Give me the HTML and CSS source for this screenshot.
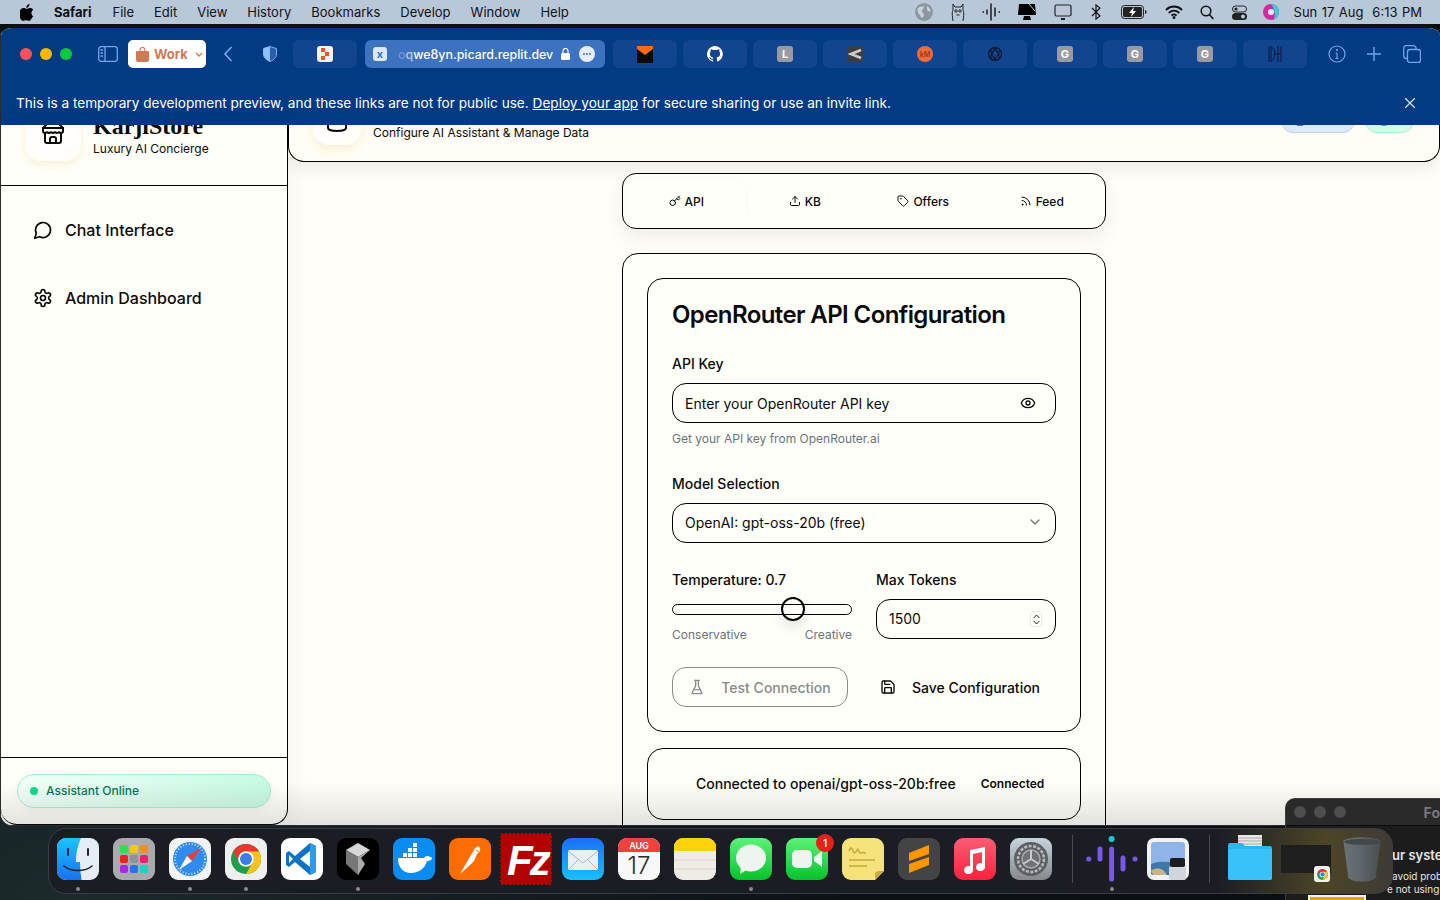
FILE: index.html
```html
<!DOCTYPE html>
<html lang="en">
<head>
    <meta charset="UTF-8">
    <meta name="viewport" content="width=device-width, initial-scale=1.0">
    <title>KarjiStore Admin Dashboard</title>
    <link rel="stylesheet" href="styles.css">
</head>
<body>
    <svg class="sprite" aria-hidden="true">
        <symbol id="i-chrome" viewBox="0 0 24 24">
            <circle cx="12" cy="12" r="10" fill="#1e9e4a"/>
            <path d="M3.34 7A10 10 0 0 1 20.66 7H12A5 5 0 0 0 7.67 14.5Z" fill="#e8382d"/>
            <path d="M20.66 7A10 10 0 0 1 12 22L16.33 14.5A5 5 0 0 0 12 7Z" fill="#fcc419"/>
            <circle cx="12" cy="12" r="5.2" fill="#fff"/>
            <circle cx="12" cy="12" r="4" fill="#3b7de8"/>
        </symbol>
        <symbol id="i-store" viewBox="0 0 24 24">
            <path d="m2 7 4.41-4.41A2 2 0 0 1 7.83 2h8.34a2 2 0 0 1 1.42.59L22 7"/><path d="M4 12v8a2 2 0 0 0 2 2h12a2 2 0 0 0 2-2v-8"/><path d="M15 22v-4a2 2 0 0 0-2-2h-2a2 2 0 0 0-2 2v4"/><path d="M2 7h20"/><path d="M22 7v3a2 2 0 0 1-2 2a2.7 2.7 0 0 1-1.59-.63.7.7 0 0 0-.82 0A2.7 2.7 0 0 1 16 12a2.7 2.7 0 0 1-1.59-.63.7.7 0 0 0-.82 0A2.7 2.7 0 0 1 12 12a2.7 2.7 0 0 1-1.59-.63.7.7 0 0 0-.82 0A2.7 2.7 0 0 1 8 12a2.7 2.7 0 0 1-1.59-.63.7.7 0 0 0-.82 0A2.7 2.7 0 0 1 4 12a2 2 0 0 1-2-2V7"/>
        </symbol>
        <symbol id="i-chat" viewBox="0 0 24 24"><path d="M7.9 20A9 9 0 1 0 4 16.1L2 22Z"/></symbol>
        <symbol id="i-gear" viewBox="0 0 24 24">
            <path d="M12.22 2h-.44a2 2 0 0 0-2 2v.18a2 2 0 0 1-1 1.73l-.43.25a2 2 0 0 1-2 0l-.15-.08a2 2 0 0 0-2.73.73l-.22.38a2 2 0 0 0 .73 2.73l.15.1a2 2 0 0 1 1 1.72v.51a2 2 0 0 1-1 1.74l-.15.09a2 2 0 0 0-.73 2.73l.22.38a2 2 0 0 0 2.73.73l.15-.08a2 2 0 0 1 2 0l.43.25a2 2 0 0 1 1 1.73V20a2 2 0 0 0 2 2h.44a2 2 0 0 0 2-2v-.18a2 2 0 0 1 1-1.73l.43-.25a2 2 0 0 1 2 0l.15.08a2 2 0 0 0 2.73-.73l.22-.39a2 2 0 0 0-.73-2.73l-.15-.08a2 2 0 0 1-1-1.74v-.5a2 2 0 0 1 1-1.74l.15-.09a2 2 0 0 0 .73-2.73l-.22-.38a2 2 0 0 0-2.73-.73l-.15.08a2 2 0 0 1-2 0l-.43-.25a2 2 0 0 1-1-1.73V4a2 2 0 0 0-2-2z"/><circle cx="12" cy="12" r="3"/>
        </symbol>
        <symbol id="i-key" viewBox="0 0 24 24"><path d="m15.5 7.5 2.3 2.3a1 1 0 0 0 1.4 0l2.1-2.1a1 1 0 0 0 0-1.4L19 4"/><path d="m21 2-9.6 9.6"/><circle cx="7.5" cy="15.5" r="5.5"/></symbol>
        <symbol id="i-upload" viewBox="0 0 24 24"><path d="M21 15v4a2 2 0 0 1-2 2H5a2 2 0 0 1-2-2v-4"/><polyline points="17 8 12 3 7 8"/><line x1="12" x2="12" y1="3" y2="15"/></symbol>
        <symbol id="i-tag" viewBox="0 0 24 24"><path d="M12.586 2.586A2 2 0 0 0 11.172 2H4a2 2 0 0 0-2 2v7.172a2 2 0 0 0 .586 1.414l8.704 8.704a2.426 2.426 0 0 0 3.42 0l6.58-6.58a2.426 2.426 0 0 0 0-3.42z"/><circle cx="7.5" cy="7.5" r=".5"/></symbol>
        <symbol id="i-rss" viewBox="0 0 24 24"><path d="M4 11a9 9 0 0 1 9 9"/><path d="M4 4a16 16 0 0 1 16 16"/><circle cx="5" cy="19" r="1"/></symbol>
        <symbol id="i-eye" viewBox="0 0 24 24"><path d="M2.062 12.348a1 1 0 0 1 0-.696 10.75 10.75 0 0 1 19.876 0 1 1 0 0 1 0 .696 10.75 10.75 0 0 1-19.876 0"/><circle cx="12" cy="12" r="3"/></symbol>
        <symbol id="i-chevron" viewBox="0 0 24 24"><path d="m6 9 6 6 6-6"/></symbol>
        <symbol id="i-flask" viewBox="0 0 24 24"><path d="M10 2v7.527a2 2 0 0 1-.211.896L4.72 20.55a1 1 0 0 0 .9 1.45h12.76a1 1 0 0 0 .9-1.45l-5.069-10.127A2 2 0 0 1 14 9.527V2"/><path d="M8.5 2h7"/><path d="M7 16h10"/></symbol>
        <symbol id="i-save" viewBox="0 0 24 24"><path d="M15.2 3a2 2 0 0 1 1.4.6l3.8 3.8a2 2 0 0 1 .6 1.4V19a2 2 0 0 1-2 2H5a2 2 0 0 1-2-2V5a2 2 0 0 1 2-2z"/><path d="M17 21v-7a1 1 0 0 0-1-1H8a1 1 0 0 0-1 1v7"/><path d="M7 3v4a1 1 0 0 0 1 1h7"/></symbol>
        <symbol id="i-database" viewBox="0 0 24 24"><ellipse cx="12" cy="5" rx="9" ry="3"/><path d="M3 5v14a9 3 0 0 0 18 0V5"/><path d="M3 12a9 3 0 0 0 18 0"/></symbol>
    </svg>

    <!-- Menu bar -->
    <header class="menubar">
        <svg class="apple" width="14" height="17" viewBox="0 0 14 17"><path d="M9.6 0c.1 1-.3 2-.9 2.700-.6.700-1.500 1.200-2.400 1.100-.1-1 .3-2 .9-2.600C7.800.500 8.800 0 9.600 0zM12.800 12.400c-.4.900-.6 1.300-1.100 2.100-.7 1.100-1.700 2.400-2.900 2.400-1.100 0-1.400-.7-2.900-.7s-1.800.7-2.900.7c-1.200 0-2.100-1.200-2.800-2.300C-.800 11.500-1 7.900.200 6.100 1 4.800 2.400 4 3.700 4c1.300 0 2.200.8 3.200.8s1.700-.8 3.200-.8c1.200 0 2.400.6 3.200 1.700-2.800 1.600-2.400 5.600.500 6.700z" fill="#000"/></svg>
        <strong class="menu-app">Safari</strong>
        <span>File</span><span>Edit</span><span>View</span><span>History</span><span>Bookmarks</span><span>Develop</span><span>Window</span><span>Help</span>
        <div class="status-items">
            <svg class="s-globe" width="18" height="18" viewBox="0 0 18 18"><circle cx="9" cy="9" r="9" fill="#8e979f"/><path d="M3 5c2-1 4-2 6-1 0 2-2 2-2 4s2 2 2 4-2 3-3 3c0-2-1-3-2-4S2 7 3 5zM12 3c2 1 3 3 4 5-2 1-4 0-4-2z" fill="#c9d3dc"/></svg>
            <svg class="s-llama" width="16" height="20" viewBox="0 0 16 20" fill="none" stroke="#222" stroke-width="1"><path d="M3 8V2l2 3h6l2-3v6c1 2 1 5 0 11M3 8c-1 2-1 5 0 11"/><circle cx="6" cy="9" r="1.200"/><circle cx="10" cy="9" r="1.200"/><path d="M6.500 13h3"/></svg>
            <svg class="s-wave" width="18" height="18" viewBox="0 0 18 18" stroke="#111" stroke-width="1.400" stroke-linecap="round"><path d="M1 9h.5M5 7v4M9 1v16M13 5v8M17 9h.5"/></svg>
            <svg class="s-mon" width="20" height="18" viewBox="0 0 20 18"><path d="M2 1h16l1 11H1zM7 13h6l1 4H6z" fill="#000"/><path d="M12 1l6 7" stroke="#fff" stroke-width=".800"/></svg>
            <svg class="s-display" width="18" height="16" viewBox="0 0 18 16" fill="none" stroke="#222" stroke-width="1.200"><rect x="1" y="1" width="16" height="11" rx="1.500"/><path d="M7 15h4" stroke-width="2"/></svg>
            <svg class="s-bt" width="10" height="16" viewBox="0 0 10 16" fill="none" stroke="#111" stroke-width="1.200"><path d="M1 4l8 8-4 3V1l4 3-8 8"/></svg>
            <svg class="s-batt" width="26" height="14" viewBox="0 0 26 14"><rect x=".500" y=".500" width="22" height="13" rx="3" fill="none" stroke="#222"/><rect x="2" y="2" width="19" height="10" rx="1.500" fill="#222"/><path d="M24 5v4c1 0 1.500-1 1.500-2S25 5 24 5z" fill="#222"/><path d="M13 2L8 8h3l-1 4 5-6h-3z" fill="#fff"/></svg>
            <svg class="s-wifi" width="18" height="14" viewBox="0 0 18 14" fill="none" stroke="#111" stroke-width="1.800" stroke-linecap="round"><path d="M1.500 4.500c4-4 11-4 15 0M4.300 7.500c2.500-2.500 6.900-2.500 9.400 0M7 10.200c1.200-1 2.800-1 4 0"/><circle cx="9" cy="12.500" r=".600"/></svg>
            <svg class="s-search" width="14" height="15" viewBox="0 0 14 15" fill="none" stroke="#111" stroke-width="1.500"><circle cx="6" cy="6" r="4.800"/><path d="M9.500 9.500l3.800 4.500"/></svg>
            <svg class="s-ctrl" width="15" height="15" viewBox="0 0 15 15"><rect x=".500" y="1" width="14" height="6" rx="3" fill="none" stroke="#222"/><circle cx="4" cy="4" r="1.600" fill="#222"/><rect y="8" width="15" height="7" rx="3.500" fill="#222"/><circle cx="11" cy="11.500" r="2" fill="#b8c8d9"/></svg>
            <svg class="s-siri" width="16" height="16" viewBox="0 0 16 16"><circle cx="8" cy="8" r="8" fill="#d32aa0"/><path d="M8 0a8 8 0 0 1 8 8 8 8 0 0 1-5 7.400C13 10 11 4 8 0z" fill="#3fc9d8"/><circle cx="8" cy="8" r="3" fill="#e6e6ff"/></svg>
        </div>
        <span class="menu-clock">Sun 17 Aug&nbsp;&nbsp;6:13 PM</span>
    </header>

    <!-- Browser window -->
    <div class="safari">
        <div class="toolbar">
            <div class="tab-row">
                <div class="lights"><i class="red"></i><i class="yellow"></i><i class="green"></i></div>
                <svg class="tb-sidebar" width="20" height="16" viewBox="0 0 20 16" fill="none" stroke="#6ea8ef" stroke-width="1.300"><rect x=".700" y=".700" width="18.600" height="14.600" rx="2.500"/><path d="M7 1v14M2.500 4h2.500M2.500 7h2.500M2.500 10h2.500"/></svg>
                <div class="profile">
                    <svg width="13" height="15" viewBox="0 0 13 15"><path d="M1 4h11a1 1 0 0 1 1 1v8a2 2 0 0 1-2 2H2a2 2 0 0 1-2-2V5a1 1 0 0 1 1-1z" fill="#d07a55"/><path d="M4 5V3a2.500 2.500 0 0 1 5 0v2" fill="none" stroke="#d07a55" stroke-width="1.200"/></svg>
                    <span>Work</span>
                    <svg class="profile-arrow" width="8" height="5" viewBox="0 0 8 5" fill="none" stroke="#d07a55" stroke-width="1.300"><path d="M1 1l3 3 3-3"/></svg>
                </div>
                <svg class="tb-back" width="10" height="16" viewBox="0 0 10 16" fill="none" stroke="#6ea8ef" stroke-width="1.700"><path d="M8.500 1L2 8l6.500 7"/></svg>
                <svg class="tb-shield" width="14" height="16" viewBox="0 0 14 16"><path d="M7 .500L13.500 2.500V8c0 3.500-3 6.200-6.500 7.500C3.500 14.200.500 11.500.500 8V2.500z" fill="#2a5ea8" stroke="#7fb2f2"/><path d="M7 .500L.500 2.500V8c0 3.500 3 6.200 6.500 7.500z" fill="#8fbdf5"/></svg>

                <div class="tab"><span class="fav fav-zap"><i></i><i></i><i></i></span></div>
                <div class="tab tab-active">
                    <span class="fav fav-x">x</span>
                    <span class="tab-url"><span class="faded">o</span><span class="half">q</span>we8yn.picard.replit.dev</span>
                    <svg width="9" height="12" viewBox="0 0 9 12"><rect y="5" width="9" height="7" rx="1.500" fill="#fff"/><path d="M2 5.500V3a2.500 2.500 0 0 1 5 0v2.500" fill="none" stroke="#fff" stroke-width="1.200"/></svg>
                    <span class="tab-more"><i></i><i></i><i></i></span>
                </div>
                <div class="tab tab-gap"><svg width="16" height="17" viewBox="0 0 16 17"><rect width="16" height="17" fill="#0a0a0a"/><path d="M0 0h16v3L8 9 0 3z" fill="#ff6a13"/></svg></div>
                <div class="tab"><svg width="16" height="16" viewBox="0 0 16 16"><path fill="#fff" d="M8 0a8 8 0 0 0-2.500 15.600c.4.100.5-.200.500-.400v-1.400c-2.200.500-2.700-1-2.700-1-.4-.9-.9-1.200-.9-1.200-.7-.5.100-.5.100-.5.800.100 1.200.8 1.200.8.700 1.200 1.900.9 2.300.7.100-.5.300-.9.500-1.100-1.800-.2-3.600-.9-3.600-4 0-.9.300-1.600.8-2.100-.1-.2-.4-1 .1-2.100 0 0 .7-.2 2.200.8a7.600 7.600 0 0 1 4 0c1.500-1 2.200-.8 2.200-.8.400 1.100.2 1.900.1 2.100.5.600.8 1.300.8 2.100 0 3.100-1.900 3.700-3.700 3.900.3.300.6.800.6 1.500v2.200c0 .2.100.5.600.4A8 8 0 0 0 8 0z"/></svg></div>
                <div class="tab"><span class="fav fav-letter">L</span></div>
                <div class="tab"><span class="fav fav-chev"><svg width="14" height="12" viewBox="0 0 14 12" fill="none" stroke="#ccc" stroke-width="2.500"><path d="M13 2L3 6l10 4"/></svg></span></div>
                <div class="tab"><span class="fav fav-orange">kM</span></div>
                <div class="tab"><svg width="16" height="16" viewBox="0 0 16 16" fill="none" stroke="#0b1a36" stroke-width="1.300"><circle cx="8" cy="8" r="6.500"/><ellipse cx="8" cy="8" rx="6.500" ry="3" transform="rotate(60 8 8)"/><ellipse cx="8" cy="8" rx="6.500" ry="3" transform="rotate(-60 8 8)"/></svg></div>
                <div class="tab"><span class="fav fav-letter">G</span></div>
                <div class="tab"><span class="fav fav-letter">G</span></div>
                <div class="tab"><span class="fav fav-letter">G</span></div>
                <div class="tab"><svg width="16" height="18" viewBox="0 0 16 18" fill="none" stroke="#0b1a36" stroke-width="1"><path d="M2 1v16M4 1v16M4 2c5 1 5 13 0 14M11 1v16M14 1v16M8 9h6"/></svg></div>

                <svg class="tb-info" width="18" height="18" viewBox="0 0 18 18" fill="none" stroke="#6ea8ef" stroke-width="1.200"><circle cx="9" cy="9" r="8"/><path d="M9 8v5.500M7.500 13.500h3M7.500 8H9"/><circle cx="9" cy="5" r=".500"/></svg>
                <svg class="tb-plus" width="14" height="14" viewBox="0 0 14 14" stroke="#6ea8ef" stroke-width="1.400"><path d="M7 0v14M0 7h14"/></svg>
                <svg class="tb-tabs" width="18" height="18" viewBox="0 0 18 18" fill="none" stroke="#6ea8ef" stroke-width="1.300"><rect x="4.500" y="4.500" width="13" height="13" rx="2.500"/><path d="M4 13.500H3A2.500 2.500 0 0 1 .700 11V3A2.500 2.500 0 0 1 3 .700h7A2.500 2.500 0 0 1 13 3v1.500"/></svg>
            </div>
            <div class="preview-banner">
                <p>This is a temporary development preview, and these links are not for public use. <a href="#">Deploy your app</a> for secure sharing or use an invite link.</p>
                <svg width="10" height="10" viewBox="0 0 10 10" stroke="#cfe0f7" stroke-width="1.300"><path d="M0 0l10 10M10 0L0 10"/></svg>
            </div>
        </div>

        <div class="app">
            <aside class="sidebar">
                <div class="brand">
                    <div class="icon-tile brand-tile"><svg class="lucide size-24"><use href="#i-store"/></svg></div>
                    <div class="brand-text">
                        <div class="brand-name">KarjiStore</div>
                        <div class="brand-sub">Luxury AI Concierge</div>
                    </div>
                </div>
                <nav class="nav">
                    <a class="nav-item" href="#"><svg class="lucide size-20"><use href="#i-chat"/></svg>Chat Interface</a>
                    <a class="nav-item" href="#"><svg class="lucide size-20"><use href="#i-gear"/></svg>Admin Dashboard</a>
                </nav>
                <div class="side-footer">
                    <div class="online-pill"><i></i>Assistant Online</div>
                </div>
            </aside>

            <main class="main">
                <div class="page-head">
                    <div class="icon-tile head-tile"><svg class="lucide size-24"><use href="#i-database"/></svg></div>
                    <div class="head-sub">Configure AI Assistant &amp; Manage Data</div>
                    <div class="head-actions">
                        <span class="head-btn head-blue"><i></i></span>
                        <span class="head-btn head-green"><i></i></span>
                    </div>
                </div>

                <div class="content">
                    <div class="tabs-card">
                        <div class="tab-link tab-link-active"><svg class="lucide size-12"><use href="#i-key"/></svg>API</div>
                        <div class="tab-link"><svg class="lucide size-12"><use href="#i-upload"/></svg>KB</div>
                        <div class="tab-link"><svg class="lucide size-12"><use href="#i-tag"/></svg>Offers</div>
                        <div class="tab-link"><svg class="lucide size-12"><use href="#i-rss"/></svg>Feed</div>
                    </div>

                    <section class="panel">
                        <div class="card config-card">
                            <h2>OpenRouter API Configuration</h2>

                            <label class="field-label" for="apiKey">API Key</label>
                            <div class="input-wrap">
                                <input id="apiKey" class="text-input" type="password" placeholder="Enter your OpenRouter API key">
                                <svg class="lucide size-16 input-eye"><use href="#i-eye"/></svg>
                            </div>
                            <p class="hint">Get your API key from OpenRouter.ai</p>

                            <div class="field-label label-gap">Model Selection</div>
                            <div class="select-box">
                                <span>OpenAI: gpt-oss-20b (free)</span>
                                <svg class="lucide size-16 select-arrow"><use href="#i-chevron"/></svg>
                            </div>

                            <div class="two-col">
                                <div>
                                    <label class="field-label" for="temperature">Temperature: 0.7</label>
                                    <input id="temperature" class="slider" type="range" min="0" max="1" step="0.1" value="0.7">
                                    <div class="slider-ends"><span>Conservative</span><span>Creative</span></div>
                                </div>
                                <div>
                                    <label class="field-label" for="maxTokens">Max Tokens</label>
                                    <div class="input-wrap">
                                        <input id="maxTokens" class="text-input number-input" type="number" value="1500">
                                        <span class="spin-box">
                                            <svg width="7" height="5" viewBox="0 0 7 5" fill="none" stroke="#222" stroke-width="1"><path d="M.7 4l2.800-3 2.800 3"/></svg>
                                            <svg width="7" height="5" viewBox="0 0 7 5" fill="none" stroke="#222" stroke-width="1"><path d="M.7 1l2.800 3 2.800-3"/></svg>
                                        </span>
                                    </div>
                                </div>
                            </div>

                            <div class="actions">
                                <button class="btn btn-test" type="button"><svg class="lucide size-16"><use href="#i-flask"/></svg>Test Connection</button>
                                <button class="btn btn-save" type="button"><svg class="lucide size-16"><use href="#i-save"/></svg>Save Configuration</button>
                            </div>
                        </div>

                        <div class="card status-card">
                            <span class="status-text">Connected to openai/gpt-oss-20b:free</span>
                            <span class="status-badge">Connected</span>
                        </div>
                    </section>
                </div>
            </main>
        </div>
    </div>

    <!-- Window behind the dock -->
    <div class="back-window">
        <div class="back-title"><i></i><i></i><i></i><b>Fo</b></div>
        <div class="back-heading">ur syste</div>
        <div class="back-line">avoid prob</div>
        <div class="back-line back-indent">e not using</div>
        <div class="back-btn"></div>
    </div>

    <!-- Dock -->
    <div class="dock">
        <div class="dock-item on"><svg viewBox="0 0 42 42"><defs><linearGradient id="fnd" x1="0" y1="0" x2="0" y2="1"><stop offset="0" stop-color="#1bc3fb"/><stop offset="1" stop-color="#1a72ee"/></linearGradient></defs><rect width="42" height="42" rx="9" fill="#e4ecf4"/><path d="M9 0h15c-3 7-5 14-5 24h4c0 6 .5 12 1.500 18H9a9 9 0 0 1-9-9V9a9 9 0 0 1 9-9z" fill="url(#fnd)"/><path d="M11 11v6M31 11v6" stroke="#223" stroke-width="2" stroke-linecap="round"/><path d="M7 28c7 6 21 6 28 0" fill="none" stroke="#223" stroke-width="1.600" stroke-linecap="round"/></svg></div>
        <div class="dock-item"><svg viewBox="0 0 42 42"><rect width="42" height="42" rx="9" fill="#a8aaad"/><g><rect x="7" y="7" width="8" height="8" rx="2" fill="#2ee04f"/><rect x="17" y="7" width="8" height="8" rx="2" fill="#f9c80e"/><rect x="27" y="7" width="8" height="8" rx="2" fill="#f98c1d"/><rect x="7" y="17" width="8" height="8" rx="2" fill="#ef1f1f"/><rect x="17" y="17" width="8" height="8" rx="2" fill="#8b9397"/><rect x="27" y="17" width="8" height="8" rx="2" fill="#f01e6e"/><rect x="7" y="27" width="8" height="8" rx="2" fill="#a72be0"/><rect x="17" y="27" width="8" height="8" rx="2" fill="#2c6ff0"/><rect x="27" y="27" width="8" height="8" rx="2" fill="#13d7c0"/></g></svg></div>
        <div class="dock-item on"><svg viewBox="0 0 42 42"><rect width="42" height="42" rx="9" fill="#f3f4f6"/><circle cx="21" cy="21" r="17" fill="#2f8bf0"/><circle cx="21" cy="21" r="15" fill="none" stroke="#cfe4fb" stroke-width="2" stroke-dasharray="1 2"/><path d="M32 10L18 18l5 5z" fill="#f03a33"/><path d="M10 32l8-14 5 5z" fill="#fff"/></svg></div>
        <div class="dock-item on"><svg viewBox="0 0 42 42"><rect width="42" height="42" rx="9" fill="#efefef"/><use href="#i-chrome" x="3" y="3" width="36" height="36"/></svg></div>
        <div class="dock-item"><svg viewBox="0 0 42 42"><rect width="42" height="42" rx="9" fill="#fff"/><path d="M29 5l6 3v26l-6 3-15-13-6 5-3-2V15l3-2 6 5z" fill="#0f72c4"/><path d="M29 13L19 21l10 8z" fill="#fff"/><path d="M8 17l4 4-4 4z" fill="#fff"/><path d="M29 5l6 3v26l-6 3z" fill="#2a9bee"/></svg></div>
        <div class="dock-item on"><svg viewBox="0 0 42 42"><rect width="42" height="42" rx="9" fill="#000"/><path d="M21 5l12 7-12 7-12-7z" fill="#d7d7d7"/><path d="M9 12l12 7v18L9 26z" fill="#777"/><path d="M33 12L21 19v18l7-11-4-6z" fill="#ababab"/></svg></div>
        <div class="dock-item"><svg viewBox="0 0 42 42"><rect width="42" height="42" rx="9" fill="#0a8cf0"/><g fill="#fff"><rect x="10" y="15" width="4" height="4"/><rect x="15" y="15" width="4" height="4"/><rect x="20" y="15" width="4" height="4"/><rect x="15" y="10" width="4" height="4"/><rect x="20" y="10" width="4" height="4"/><rect x="20" y="5" width="4" height="4"/><path d="M5 20h26c1-2 4-3 6-1 2 0 2 1 2 2-2 2-4 2-5 2-2 8-9 12-16 12-8 0-13-6-13-15z"/></g></svg></div>
        <div class="dock-item"><svg viewBox="0 0 42 42"><rect width="42" height="42" rx="9" fill="#ff6c00"/><path d="M11 36l8-14 6-10c1-3 5-5 6-2 1 2-1 5-3 6l-3 7-5 5z" fill="#fff"/><path d="M27 12l4 3" stroke="#ff6c00"/></svg></div>
        <div class="dock-item dock-fz"><svg viewBox="0 0 52 52"><rect x="1" y="1" width="50" height="50" fill="#b30000" stroke="#b30000" stroke-width="2" stroke-dasharray="2 2"/><text x="7" y="42" class="fz-text">Fz</text></svg></div>
        <div class="dock-item"><svg viewBox="0 0 42 42"><defs><linearGradient id="ml" x1="0" y1="0" x2="0" y2="1"><stop offset="0" stop-color="#1b6ff5"/><stop offset="1" stop-color="#19c0fd"/></linearGradient></defs><rect width="42" height="42" rx="9" fill="url(#ml)"/><rect x="6" y="12" width="30" height="20" rx="2" fill="#e9eff5"/><path d="M6 13l15 12 15-12M6 32l11-11M36 32L25 21" fill="none" stroke="#aeb9c4" stroke-width="1"/></svg></div>
        <div class="dock-item"><svg viewBox="0 0 42 42"><rect width="42" height="42" rx="9" fill="#f8f8f8"/><path d="M0 14V9a9 9 0 0 1 9-9h24a9 9 0 0 1 9 9v5z" fill="#f0413c"/><text x="21" y="10.500" class="cal-month">AUG</text><text x="21" y="36" class="cal-day">17</text></svg></div>
        <div class="dock-item"><svg viewBox="0 0 42 42"><rect width="42" height="42" rx="9" fill="#efece6"/><path d="M0 13V9a9 9 0 0 1 9-9h24a9 9 0 0 1 9 9v4z" fill="#fdd20a"/><path d="M0 22h42M0 31h42" stroke="#d9d5cc"/></svg></div>
        <div class="dock-item on"><svg viewBox="0 0 42 42"><defs><linearGradient id="gr" x1="0" y1="0" x2="0" y2="1"><stop offset="0" stop-color="#5df276"/><stop offset="1" stop-color="#07c32b"/></linearGradient></defs><rect width="42" height="42" rx="9" fill="url(#gr)"/><ellipse cx="21" cy="20" rx="15" ry="13.500" fill="#eef5ee"/><path d="M11 28l-1 8 8-5z" fill="#eef5ee"/></svg></div>
        <div class="dock-item"><svg viewBox="0 0 42 42"><rect width="42" height="42" rx="9" fill="url(#gr)"/><rect x="6" y="12" width="20" height="18" rx="5" fill="#eef5ee"/><path d="M28 19l8-6v16l-8-6z" fill="#eef5ee"/></svg><span class="dock-badge">1</span></div>
        <div class="dock-item"><svg viewBox="0 0 42 42"><path d="M9 0h24a9 9 0 0 1 9 9v24l-9 9H9a9 9 0 0 1-9-9V9a9 9 0 0 1 9-9z" fill="#f6e27a"/><path d="M33 42v-5a4 4 0 0 1 4-4h5z" fill="#c9ad3c"/><path d="M7 13c2-5 3-3 4 0s3 2 4-1 2 4 4 3 3 0 5 0M7 22h26M7 28h18" fill="none" stroke="#c7a93a" stroke-width="1.500"/></svg></div>
        <div class="dock-item"><svg viewBox="0 0 42 42"><rect width="42" height="42" rx="9" fill="#444"/><path d="M31 7v9L11 23v-8zM11 35v-9l20-7v8z" fill="#ff9800"/></svg></div>
        <div class="dock-item"><svg viewBox="0 0 42 42"><defs><linearGradient id="mu" x1="0" y1="0" x2="0" y2="1"><stop offset="0" stop-color="#fb5c74"/><stop offset="1" stop-color="#fa233b"/></linearGradient></defs><rect width="42" height="42" rx="9" fill="url(#mu)"/><path d="M16 12l15-3v20a4.500 4 0 1 1-3-3.700V14l-9 2v16a4.500 4 0 1 1-3-3.700z" fill="#fff"/></svg></div>
        <div class="dock-item"><svg viewBox="0 0 42 42"><defs><linearGradient id="sp" x1="0" y1="0" x2="0" y2="1"><stop offset="0" stop-color="#c5d5dc"/><stop offset="1" stop-color="#86888b"/></linearGradient></defs><rect width="42" height="42" rx="9" fill="url(#sp)"/><circle cx="21" cy="21" r="17" fill="#5c5f63"/><circle cx="21" cy="21" r="13" fill="none" stroke="#b8bcc0" stroke-width="2.500" stroke-dasharray="3 1.500"/><circle cx="21" cy="21" r="9" fill="#6e7175" stroke="#aaa" stroke-width="1.500"/><path d="M21 21V12M21 21l8 5M21 21l-8 5" stroke="#c7c9cc" stroke-width="2"/></svg></div>
        <div class="dock-sep"></div>
        <div class="dock-item dock-wave on"><svg viewBox="0 0 54 54"><circle cx="26.600" cy="9" r="3" fill="#1fc7d4"/><g stroke="#7a55ee" stroke-width="5" stroke-linecap="round"><path d="M3.700 29h.1M15 19v10M26.600 19v30M38 28v11M50 29h.1"/></g></svg></div>
        <div class="dock-item"><svg viewBox="0 0 42 42"><rect width="42" height="42" rx="7" fill="#f2f2f2"/><rect x="4" y="4" width="34" height="33" rx="3" fill="#8fb4ea"/><path d="M4 26c10-4 20-2 34 0v9a2 2 0 0 1-2 2H6a2 2 0 0 1-2-2z" fill="#3f78a8"/><path d="M4 32c8-3 12-2 16 5H6z" fill="#c7b28a"/><rect x="22" y="28" width="17" height="14" rx="2" fill="#cfd6dc"/><rect x="23" y="20" width="15" height="9" rx="2" fill="#1c1c1c"/></svg></div>
        <div class="dock-sep"></div>
        <div class="dock-item dock-folder"><svg viewBox="0 0 44 45"><rect x="10" y="0" width="24" height="14" fill="#e8e8e8"/><path d="M10 3h24M10 6h24M10 9h24" stroke="#aaa"/><path d="M2 8h12l3 3h25a2 2 0 0 1 2 2v30a2 2 0 0 1-2 2H2a2 2 0 0 1-2-2V10a2 2 0 0 1 2-2z" fill="#2ab5f3"/><rect y="14" width="44" height="31" rx="2" fill="#39c1fa"/></svg></div>
        <div class="dock-item dock-thumb"><span class="thumb-chrome"><svg width="13" height="13"><use href="#i-chrome"/></svg></span></div>
        <div class="dock-item dock-trash"><svg viewBox="0 0 40 46"><defs><linearGradient id="tr" x1="0" y1="0" x2="1" y2="0"><stop offset="0" stop-color="#6a7378"/><stop offset=".5" stop-color="#5b6468"/><stop offset="1" stop-color="#484f53"/></linearGradient></defs><path d="M1 4c6-5 32-5 38 0l-5 38c-5 5-23 5-28 0z" fill="url(#tr)"/><ellipse cx="20" cy="5" rx="18" ry="3" fill="#41484c"/></svg></div>
    </div>
</body>
</html>
```

FILE: styles.css
```css
* {
    box-sizing: border-box;
}

html, body {
    height: 100%;
}

body {
    margin: 0;
    position: relative;
    overflow: hidden;
    font-family: "Inter", "Liberation Sans", sans-serif;
    color: #0a0a0a;
    background: radial-gradient(ellipse at 5% 100%, #1c2a2c 0, #0c1116 40%, #090c11 100%);
}

.sprite {
    display: none;
}

/* Lucide style icons */
.lucide {
    flex: none;
    fill: none;
    stroke: currentColor;
    stroke-width: 2;
    stroke-linecap: round;
    stroke-linejoin: round;
}

.size-12 { width: 12px; height: 12px; }
.size-16 { width: 16px; height: 16px; }
.size-20 { width: 20px; height: 20px; }
.size-24 { width: 24px; height: 24px; }

/* Menu bar */
.menubar {
    height: 24px;
    display: flex;
    align-items: center;
    padding-left: 20px;
    background: #b8c8d9;
    font-size: 13px;
    color: #111;
}

.menubar > span {
    margin-right: 20px;
}

.apple {
    margin-right: 20px;
}

.menu-app {
    margin-right: 21px;
    font-weight: 700;
}

.status-items {
    margin-left: auto;
    display: flex;
    align-items: center;
    margin-right: 14.500px;
}

.s-llama { margin-left: 17px; }
.s-wave { margin-left: 16px; }
.s-mon { margin-left: 17px; }
.s-display { margin-left: 17px; }
.s-bt { margin-left: 19px; }
.s-batt { margin-left: 20px; }
.s-wifi { margin-left: 18px; }
.s-search { margin-left: 17px; }
.s-ctrl { margin-left: 18px; }
.s-siri { margin-left: 16px; }

.menubar .menu-clock {
    margin-right: 18px;
    word-spacing: 0.800px;
}

/* Browser window */
.safari {
    height: 802px;
    display: flex;
    flex-direction: column;
    overflow: hidden;
    border-left: 1px solid #2c2c2c;
    border-bottom: 1px solid #2c2c2c;
    border-top: 4px solid #111;
    border-radius: 12px;
    background: #fffef9;
}

.toolbar {
    height: 97px;
    flex: none;
    background: #023a84;
    color: #fff;
}

.tab-row {
    display: flex;
    align-items: center;
    height: 28px;
    margin-top: 12px;
    padding-left: 19px;
}

.lights {
    display: flex;
    gap: 8px;
}

.lights i {
    width: 12px;
    height: 12px;
    border-radius: 50%;
}

.lights .red { background: #ff5257; }
.lights .yellow { background: #ffb800; }
.lights .green { background: #0fc83c; }

.tb-sidebar {
    margin-left: 26px;
}

.profile {
    width: 78px;
    height: 28px;
    margin-left: 10px;
    display: flex;
    align-items: center;
    gap: 5px;
    padding-left: 8px;
    border-radius: 5px;
    background: #fff;
    color: #d07a55;
    font-size: 13px;
    font-weight: 700;
}

.profile-arrow {
    margin-left: 2px;
}

.tb-back {
    margin-left: 17px;
}

.tb-shield {
    margin-left: 30px;
    margin-right: 16px;
}

.tab {
    width: 64px;
    height: 28px;
    flex: none;
    display: flex;
    align-items: center;
    justify-content: center;
    margin-right: 6px;
    border-radius: 6px;
    background: #124590;
}

.tab-active {
    width: 240px;
    justify-content: flex-start;
    margin: 0 8px;
    padding-left: 8px;
    background: #3c72bf;
}

.tab + .tab-active {
    margin-left: 2px;
}

.tab-url {
    margin-left: 11px;
    margin-right: 8px;
    font-size: 12.400px;
    font-weight: 500;
    white-space: nowrap;
}

.faded { opacity: 0.25; }
.half { opacity: 0.6; }

.tab-more {
    width: 16px;
    height: 16px;
    margin-left: 9px;
    display: flex;
    align-items: center;
    justify-content: center;
    gap: 1px;
    border-radius: 50%;
    background: #e4edf9;
}

.tab-more i {
    width: 2px;
    height: 2px;
    border-radius: 50%;
    background: #3c72bf;
}

.fav {
    width: 16px;
    height: 16px;
    display: flex;
    align-items: center;
    justify-content: center;
    border-radius: 3px;
    font-size: 11px;
    font-weight: 700;
    color: #fff;
}

.fav-zap {
    position: relative;
    background: #f2f2f2;
}

.fav-zap i {
    position: absolute;
    width: 4px;
    height: 4px;
    background: #f2541b;
}

.fav-zap i:nth-child(1) { left: 4px; top: 2px; }
.fav-zap i:nth-child(2) { left: 8px; top: 6px; }
.fav-zap i:nth-child(3) { left: 4px; top: 10px; }

.fav-x {
    width: 14px;
    height: 14px;
    background: #dde8f6;
    color: #3c72bf;
}

.fav-letter {
    background: #9a9aa2;
}

.fav-chev {
    background: #3d3d40;
}

.fav-orange {
    border-radius: 50%;
    background: #f26c3a;
    color: #a83b14;
    font-size: 7px;
}

.tb-info {
    margin-left: 15px;
}

.tb-plus {
    margin-left: 21px;
}

.tb-tabs {
    margin-left: 22px;
}

.preview-banner {
    display: flex;
    align-items: center;
    justify-content: space-between;
    padding: 0 25px 0 15px;
    margin-top: 25px;
    height: 20px;
    font-size: 13.620px;
}

.preview-banner p {
    margin: 0;
    white-space: nowrap;
}

.preview-banner a {
    color: #fff;
}

/* App layout */
.app {
    position: relative;
    flex: 1;
    min-height: 0;
    display: flex;
    background: #fffef9;
}

/* soft shade where the window meets the dock */
.app::after {
    content: "";
    position: absolute;
    left: 0;
    right: 0;
    bottom: 0;
    height: 44px;
    background: linear-gradient(to bottom, rgba(60, 55, 45, 0), rgba(60, 55, 45, 0.14));
    pointer-events: none;
}

.sidebar {
    width: 287px;
    flex: none;
    display: flex;
    flex-direction: column;
    border-right: 1px solid #000;
    border-bottom: 1px solid #000;
    border-radius: 0 0 16px 16px;
    background: #fffffa;
    box-shadow: 0 0 24px rgba(0, 0, 0, 0.06);
}

.brand {
    height: 61px;
    flex: none;
    display: flex;
    align-items: flex-end;
    gap: 12px;
    overflow: hidden;
    padding: 0 24px 24px 24px;
    border-bottom: 1px solid #000;
}

.icon-tile {
    flex: none;
    display: flex;
    align-items: center;
    justify-content: center;
    border-radius: 16px;
    background: #fffefa;
    box-shadow: 0 4px 10px rgba(226, 190, 90, 0.22);
}

.brand-tile {
    width: 56px;
    height: 56px;
}

.brand-text {
    margin-bottom: 4px;
}

.brand-name {
    margin-bottom: -1px;
    font-family: "Liberation Serif", serif;
    font-size: 24px;
    font-weight: 700;
    line-height: 32px;
}

.brand-sub {
    font-size: 12px;
    line-height: 16px;
}

.nav {
    flex: 1;
    display: flex;
    flex-direction: column;
    gap: 20px;
    padding: 20px 16px 0 16px;
}

.nav-item {
    height: 48px;
    display: flex;
    align-items: center;
    gap: 12px;
    padding-left: 16px;
    color: #0a0a0a;
    font-size: 16px;
    font-weight: 500;
    text-decoration: none;
}

.side-footer {
    height: 67px;
    flex: none;
    padding: 16px;
    border-top: 1px solid #000;
}

.online-pill {
    height: 34px;
    display: flex;
    align-items: center;
    gap: 8px;
    padding: 0 0 2px 12px;
    border: 1px solid #9ff3d2;
    border-radius: 17px;
    background: linear-gradient(to right, #effff8, #c7fae3);
    color: #047857;
    font-size: 12px;
    font-weight: 500;
    box-shadow: 0 4px 10px rgba(0, 0, 0, 0.04);
}

.online-pill i {
    width: 8px;
    height: 8px;
    margin-top: 2px;
    border-radius: 50%;
    background: #0bd98f;
}

.main {
    flex: 1;
    min-width: 0;
    overflow: hidden;
}

.page-head {
    height: 37px;
    display: flex;
    align-items: flex-end;
    overflow: hidden;
    padding: 0 24px 16px 24px;
    border-bottom: 1px solid #000;
    border-left: 1px solid #000;
    border-right: 1px solid #000;
    border-radius: 0 0 16px 16px;
    background: #fffdf5;
    box-shadow: 0 6px 16px rgba(0, 0, 0, 0.08);
}

.head-tile {
    width: 48px;
    height: 48px;
}

.head-sub {
    margin: 0 0 4px 12px;
    font-size: 12px;
    line-height: 16px;
    white-space: nowrap;
}

.head-actions {
    margin-left: auto;
    display: flex;
    gap: 10px;
    margin-right: 1px;
    margin-bottom: 12px;
}

.head-btn {
    position: relative;
    height: 32px;
    display: block;
    border-radius: 12px;
}

.head-btn i {
    position: absolute;
    bottom: 6px;
    width: 10px;
    height: 4px;
    border-radius: 0 0 4px 4px;
}

.head-blue {
    width: 74px;
    border: 1px solid #bdd3fa;
    background: #dbe8fd;
}

.head-blue i {
    left: 13px;
    background: #4a6fd8;
}

.head-green {
    width: 49px;
    border: 1px solid #a7f3d0;
    background: #d3fbe6;
}

.head-green i {
    left: 13px;
    background: #3fb57c;
}

.content {
    width: 484px;
    margin: 11px auto 0 auto;
}

.tabs-card {
    display: grid;
    grid-template-columns: repeat(4, 1fr);
    height: 56px;
    padding: 4px;
    border: 1px solid #000;
    border-radius: 14px;
    background: #fffffa;
    box-shadow: 0 8px 20px rgba(0, 0, 0, 0.07);
}

.tab-link {
    display: flex;
    align-items: center;
    justify-content: center;
    gap: 4px;
    border-radius: 12px;
    font-size: 12px;
    font-weight: 500;
}

.tab-link-active {
    box-shadow: 0 0 4px rgba(0, 0, 0, 0.03);
}

.panel {
    height: 700px;
    margin-top: 24px;
    padding: 24px;
    border: 1px solid #000;
    border-radius: 16px;
    background: #fffffa;
}

.card {
    border: 1px solid #000;
    border-radius: 16px;
}

.config-card {
    padding: 24px;
}

h2 {
    margin: 0 0 28px 0;
    font-size: 24px;
    font-weight: 600;
    line-height: 24px;
    letter-spacing: -0.6px;
}

.field-label {
    display: block;
    margin-bottom: 10px;
    font-size: 14px;
    font-weight: 500;
    line-height: 18px;
}

.label-gap {
    margin-top: 28px;
}

.input-wrap {
    position: relative;
}

.text-input {
    display: block;
    width: 100%;
    height: 40px;
    padding: 0 12px;
    border: 1px solid #000;
    border-radius: 14px;
    background: transparent;
    color: #0a0a0a;
    font: 14px "Inter", "Liberation Sans", sans-serif;
    outline: none;
}

.text-input::placeholder {
    color: #0a0a0a;
    opacity: 1;
}

.input-eye {
    position: absolute;
    right: 20px;
    top: 12px;
}

.hint {
    margin: 8px 0 0 0;
    color: #6b7280;
    font-size: 12px;
    line-height: 16px;
}

.select-box {
    height: 40px;
    display: flex;
    align-items: center;
    justify-content: space-between;
    padding: 0 12px 2px 12px;
    border: 1px solid #000;
    border-radius: 14px;
    font-size: 14px;
}

.select-arrow {
    color: #737373;
}

.two-col {
    display: grid;
    grid-template-columns: 1fr 1fr;
    gap: 24px;
    margin-top: 28px;
}

.slider {
    display: block;
    width: 100%;
    height: 24px;
    margin: -2px 0 0 0;
    background: transparent;
    -webkit-appearance: none;
    appearance: none;
}

.slider::-webkit-slider-runnable-track {
    height: 11px;
    border: 1px solid #000;
    border-radius: 6px;
    background: transparent;
}

.slider::-webkit-slider-thumb {
    -webkit-appearance: none;
    width: 24px;
    height: 24px;
    margin-top: -7.5px;
    border: 2px solid #000;
    border-radius: 50%;
    background: transparent;
    box-shadow: 0 6px 12px rgba(0, 0, 0, 0.1);
}

.slider-ends {
    display: flex;
    justify-content: space-between;
    margin-top: 6px;
    color: #6b7280;
    font-size: 12px;
    line-height: 16px;
}

.number-input {
    padding-bottom: 2px;
    -moz-appearance: textfield;
}

.number-input::-webkit-inner-spin-button {
    -webkit-appearance: none;
    margin: 0;
}

.spin-box {
    position: absolute;
    right: 14px;
    top: 12px;
    width: 12px;
    height: 16px;
    display: flex;
    flex-direction: column;
    align-items: center;
    justify-content: center;
    gap: 1px;
    border: 1px solid #e8e8e8;
    border-radius: 3px;
}

.actions {
    display: flex;
    gap: 16px;
    margin-top: 24px;
}

.btn {
    height: 40px;
    display: flex;
    align-items: center;
    justify-content: center;
    gap: 16px;
    padding: 0 16px;
    border-radius: 14px;
    background: transparent;
    font: 500 14px "Inter", "Liberation Sans", sans-serif;
    white-space: nowrap;
}

.btn-test {
    flex: none;
    width: 176px;
    border: 1px solid #8a8a8a;
    color: #8a8a8a;
}

.btn-save {
    flex: 1;
    padding: 0;
    border: none;
    color: #0a0a0a;
}

.status-card {
    height: 72px;
    margin-top: 16px;
    display: flex;
    align-items: center;
    padding: 0 0 2px 48px;
}

.status-text {
    font-size: 14px;
    font-weight: 500;
    white-space: nowrap;
}

.status-badge {
    margin-left: 25px;
    font-size: 12px;
    font-weight: 600;
}

/* Window behind the dock */
.back-window {
    position: absolute;
    left: 1285px;
    top: 798px;
    right: 0;
    bottom: 0;
    overflow: hidden;
    border: 1px solid #3d3d3d;
    border-right: none;
    border-bottom: none;
    border-radius: 10px 0 0 0;
    background: #1c1c1c;
    color: #e6e6e6;
    white-space: nowrap;
}

.back-title {
    height: 27px;
    display: flex;
    align-items: center;
    gap: 8px;
    padding-left: 8px;
    border-bottom: 1px solid #0c0c0c;
    background: #2a2a2a;
}

.back-title i {
    width: 12px;
    height: 12px;
    border-radius: 50%;
    background: #4e4e4e;
}

.back-title b {
    margin-left: 70px;
    color: #777;
    font-size: 14px;
}

.back-heading {
    margin-top: 20px;
    padding-left: 106px;
    font-size: 13px;
    font-weight: 600;
    line-height: 18px;
}

.back-line {
    margin-top: 6px;
    padding-left: 106px;
    font-size: 10px;
    line-height: 13px;
}

.back-indent {
    margin-top: 0;
    padding-left: 101px;
}

.back-btn {
    position: absolute;
    left: 22px;
    top: 96px;
    width: 58px;
    height: 10px;
    border: 2px solid #f1f1f1;
    background: #d9a31c;
}

/* Dock */
.dock {
    position: absolute;
    left: 48px;
    top: 828px;
    width: 1345px;
    height: 66px;
    display: flex;
    align-items: center;
    gap: 14px;
    padding: 0 0 4px 8px;
    border: 1px solid #3b3c42;
    border-radius: 18px;
    background: linear-gradient(to right, #1b1d25 0, #1b1d25 87%, #4c4526 95%, #3e3b35 100%);
}

.dock-item {
    position: relative;
    width: 42px;
    height: 42px;
    flex: none;
}

.dock-item > svg {
    display: block;
    width: 100%;
    height: 100%;
}

.dock-item.on::after {
    content: "";
    position: absolute;
    left: 19px;
    bottom: -11px;
    width: 4px;
    height: 4px;
    border-radius: 50%;
    background: #8a8a8a;
}

.dock-fz {
    margin-right: 1px;
}

.dock-fz > svg,
.dock-wave > svg {
    position: absolute;
    left: -5px;
    top: -5px;
    width: 52px;
    height: 52px;
}

.dock-wave > svg {
    left: -6px;
    top: -8px;
    width: 54px;
    height: 54px;
}

.fz-text {
    fill: #fff;
    font-family: "Liberation Sans", sans-serif;
    font-size: 42px;
    font-weight: 700;
    font-style: italic;
    letter-spacing: -3px;
}

.cal-month {
    fill: #fff;
    font-size: 9px;
    font-weight: 600;
    text-anchor: middle;
}

.cal-day {
    fill: #2a2a2a;
    font-size: 24px;
    font-weight: 300;
    text-anchor: middle;
}

.dock-badge {
    position: absolute;
    right: -6px;
    top: -4px;
    width: 18px;
    height: 18px;
    border-radius: 50%;
    background: #e8201a;
    color: #fff;
    font-size: 10px;
    font-weight: 600;
    line-height: 18px;
    text-align: center;
}

.dock-sep {
    width: 1px;
    height: 48px;
    margin: 0 4px 0 6px;
    flex: none;
    background: #4b4c52;
}

.dock-folder {
    width: 44px;
    height: 45px;
    margin-top: -3px;
}

.dock-thumb {
    width: 50px;
    height: 28px;
    margin-left: -5px;
    background: #1e1e1e;
}

.thumb-chrome {
    position: absolute;
    right: 1px;
    bottom: -9px;
    width: 16px;
    height: 16px;
    display: flex;
    align-items: center;
    justify-content: center;
    border-radius: 3px;
    background: #f2f2f2;
}

.dock-trash {
    width: 40px;
    height: 45px;
    margin-left: -3px;
}
```
